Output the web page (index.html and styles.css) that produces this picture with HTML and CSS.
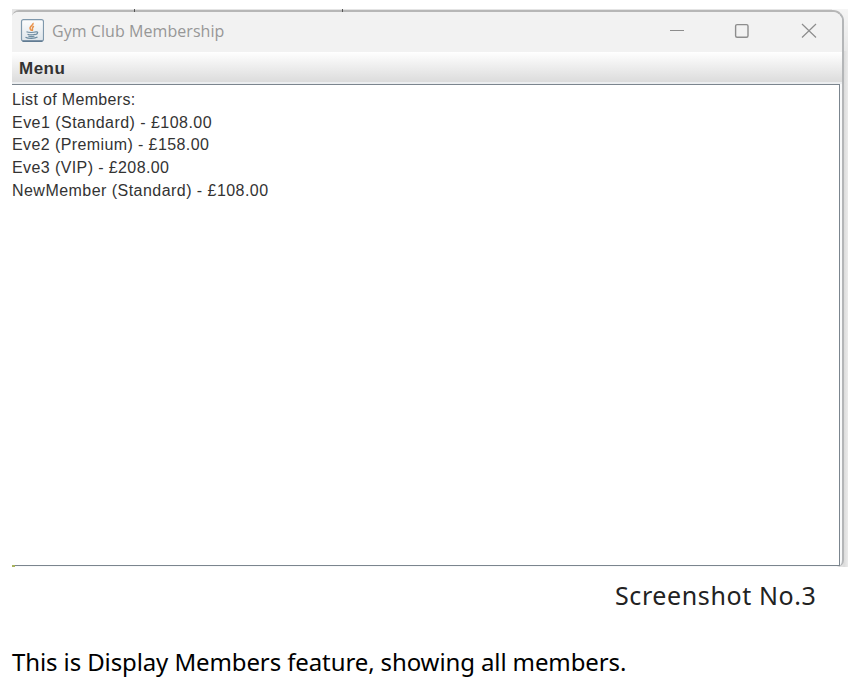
FILE: index.html
```
<!DOCTYPE html>
<html lang="en">
<head>
<meta charset="utf-8">
<title>Gym Club Membership</title>
<link rel="stylesheet" href="styles.css">
</head>
<body>
<main class="page">
  <div class="backdrop">
    <i class="tick tick-a"></i><i class="tick tick-b"></i><i class="corner"></i>
    <section class="window">
      <header class="titlebar">
        <svg class="app-icon" width="24" height="24" viewBox="0 0 24 24">
          <defs>
            <linearGradient id="tile" x1="0" y1="0" x2="0" y2="1"><stop offset="0" stop-color="#fdfdfd"/><stop offset="1" stop-color="#dde4ea"/></linearGradient>
          </defs>
          <rect x="1.500" y=".7" width="22" height="21.500" rx="2" fill="url(#tile)" stroke="#7f98ac" stroke-width="1.200"/>
          <path d="M2.500 22.200h20" stroke="#4e6b85" stroke-width="1.200"/>
          <path d="M13 3.800c1.200 2.200-4.200 3.600-2.800 6 .4.800 1.200 1.400 1.300 2.200M14 7.200c-3.200 1.400-.6 2.600-1.800 4.600" fill="none" stroke="#e8924c" stroke-width="1.500"/>
          <path d="M6.500 12.800c2 .9 7 .9 9.500 0M7.500 15.200c2 .8 5.500.8 7.500 0M8.300 17c2 .7 4.400.7 6.200 0M16 12.900c2.400-.4 2.200 2.200-.8 2.800M5.500 18.200c2.500 1.500 9.500 1.500 12-.1" fill="none" stroke="#6c8ba0" stroke-width="1.200"/>
        </svg>
        <h1 class="title"><span>Gym Club Membership</span></h1>
        <svg class="controls" width="150" height="20" viewBox="0 0 150 20" fill="none" stroke="#8d8d8d">
          <path d="M1 9.500h14"/>
          <rect x="66.600" y="3.600" width="12.400" height="12.600" rx="1.500" stroke-width="1.400"/>
          <path d="M133 3l14 13.500M147 3l-14 13.500" stroke-width="1.200"/>
        </svg>
      </header>
      <nav class="menubar"><span>Menu</span></nav>
      <div class="textarea">
        <p class="l1">List of Members:</p>
        <p class="l2">Eve1 (Standard) - £108.00</p>
        <p class="l3">Eve2 (Premium) - £158.00</p>
        <p class="l3">Eve3 (VIP) - £208.00</p>
        <p class="l2">NewMember (Standard) - £108.00</p>
      </div>
    </section>
  </div>
  <p class="label">Screenshot No.3</p>
  <p class="caption">This is Display Members feature, showing all members.</p>
</main>
</body>
</html>
```
FILE: styles.css
```
* { box-sizing: border-box; }
body { margin: 0; background: #fff; }
h1, p { margin: 0; font-weight: normal; white-space: nowrap; }
.page { width: 854px; height: 682px; padding: 9px 0 0 12px; overflow: hidden; }
.backdrop {
  position: relative;
  width: 836px;
  height: 558px;
  padding: 1px 4px 0 0;
  background: linear-gradient(90deg, #e4e4e4 830px, #dcdcdc 832px, #ebebeb);
}
.backdrop::before {
  content: "";
  position: absolute;
  right: 0;
  top: 0;
  width: 16px;
  height: 42px;
  background: linear-gradient(#f5f5f5, #e8e8e8);
}
.tick { position: absolute; top: 0; width: 1px; height: 3px; background: #555; z-index: 1; }
.tick-a { left: 122px; }
.tick-b { left: 330px; }
.corner { position: absolute; left: 0; bottom: 0; width: 3px; height: 2px; background: #a9b35c; z-index: 1; }
.window {
  position: relative;
  height: 557px;
  border-top: 2px solid #b7b7b7;
  border-right: 2px solid #b4b6b8;
  border-radius: 7px 11px 7px 0;
  background: #f8f9fa;
  overflow: hidden;
}
.titlebar { display: flex; align-items: center; height: 40px; padding: 0 23px 2px 8px; background: #f2f2f2; }
.app-icon { margin-right: 8px; }
.title { flex: 1; font: 16px/24px "Open Sans", sans-serif; letter-spacing: .06px; color: #979797; }
.menubar {
  height: 32px;
  padding-left: 7px;
  border-bottom: 2px solid #eceef0;
  background: linear-gradient(#fff, #dcdcdc);
  font: bold 17px/33px "Liberation Sans", sans-serif;
  letter-spacing: .5px;
  color: #333;
}
.textarea {
  width: 828px;
  height: 482px;
  padding-top: 4px;
  border: 1px solid #7b858e;
  border-left: 0;
  background: #fff;
  font: 16px/22.7px "Liberation Sans", sans-serif;
  color: #333;
}
.l1 { letter-spacing: .33px; }
.l2 { letter-spacing: .46px; }
.l3 { letter-spacing: .4px; }
.label { padding-left: 603px; margin-top: 8px; font: 25px/40px "Noto Sans", sans-serif; letter-spacing: .6px; color: #222; }
.caption { margin-top: 27px; font: 24px/40px "Noto Sans", sans-serif; letter-spacing: -.11px; color: #000; }
```
